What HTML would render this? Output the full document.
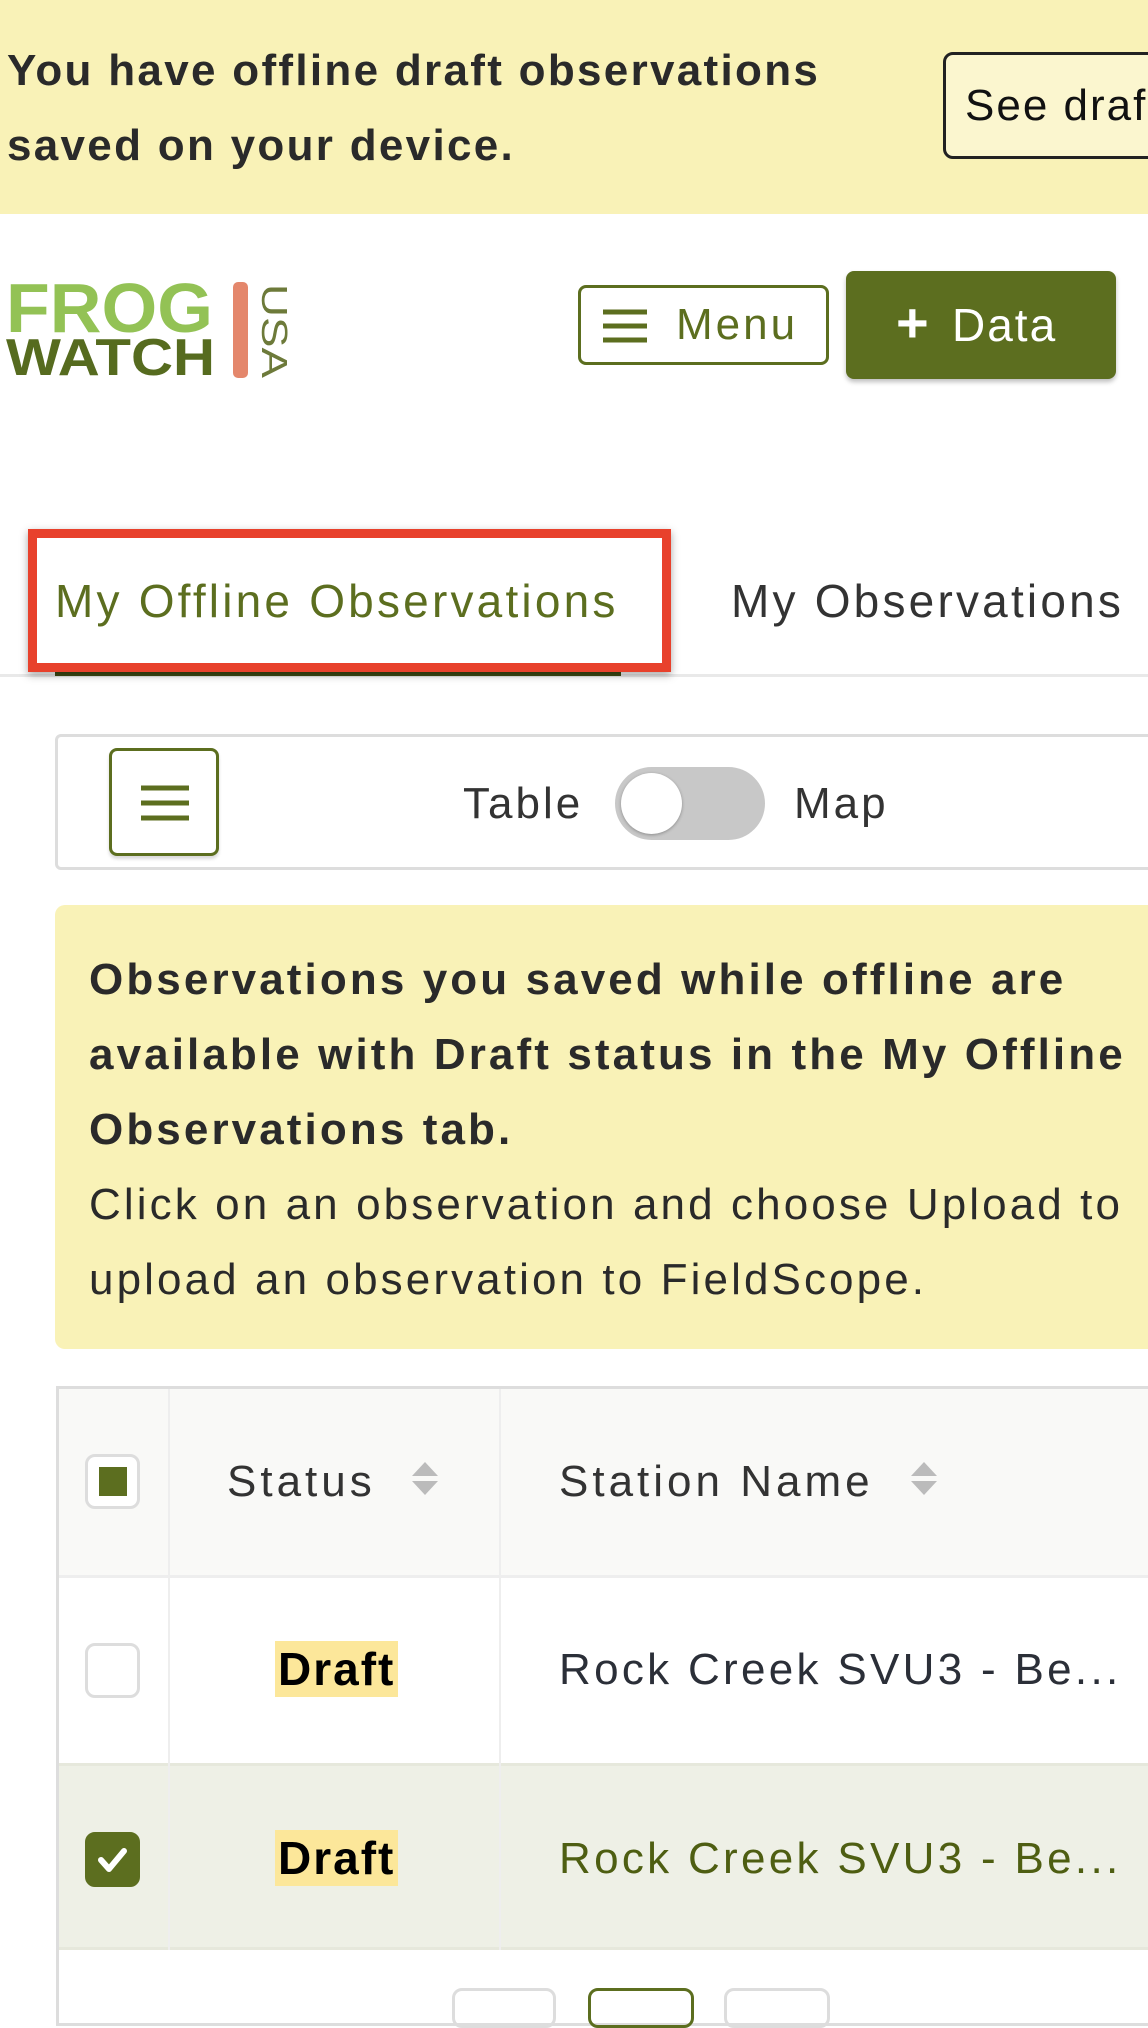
<!DOCTYPE html>
<html><head><meta charset="utf-8">
<style>
*{box-sizing:border-box;margin:0;padding:0}
html,body{width:1148px;height:1996px;overflow:hidden;background:#fff;font-family:"Liberation Sans",sans-serif;color:#222}
.abs{position:absolute}
.banner{left:0;top:0;width:1148px;height:214px;background:#f9f2b7}
.banner p{position:absolute;left:7px;top:33px;font-size:44px;font-weight:bold;line-height:75px;color:#2a2a2a;letter-spacing:2.3px;white-space:nowrap}
.see{left:943px;top:52px;width:260px;height:107px;border:3px solid #222;border-radius:10px;font-size:44px;line-height:101px;padding-left:19px;color:#111;background:#fbf6cf;letter-spacing:2px;white-space:nowrap}
.menu{left:578px;top:285px;width:251px;height:80px;border:3px solid #5c6e1f;border-radius:8px;color:#5c6e1f;font-size:44px}
.data{left:846px;top:271px;width:270px;height:108px;background:#5c6e1f;border-radius:8px;color:#fff;font-size:46px;box-shadow:0 3px 5px rgba(0,0,0,.25)}
.tabtxt{font-size:46px;letter-spacing:3.2px;line-height:60px;white-space:nowrap}
.cb{width:55px;height:55px;border:3px solid #ddd;border-radius:10px;background:#fff}
.th{font-size:44px;color:#333;letter-spacing:4px;line-height:60px;white-space:nowrap}
.draft{background:#fce79a;font-weight:bold;font-size:46px;color:#000;padding:2px 3px;letter-spacing:2px}
.st{font-size:44px;letter-spacing:3.3px;line-height:60px;white-space:nowrap}
.arr{width:0;height:0;border-left:13px solid transparent;border-right:13px solid transparent}
</style></head><body>
<div class="abs banner"><p>You have offline draft observations<br>saved on your device.</p></div>
<div class="abs see">See drafts</div>

<svg class="abs" style="left:0;top:280px" width="295" height="104" viewBox="0 0 295 104">
<text x="6" y="52" font-family="Liberation Sans" font-weight="bold" font-size="70" fill="#93c255" textLength="207" lengthAdjust="spacingAndGlyphs">FROG</text>
<text x="6" y="95" font-family="Liberation Sans" font-weight="bold" font-size="52" fill="#566b1f" textLength="209" lengthAdjust="spacingAndGlyphs">WATCH</text>
<rect x="233" y="2" width="15" height="96" rx="5" fill="#e4876c"/>
<text transform="translate(262,4) rotate(90)" font-family="Liberation Sans" font-size="36" fill="#6d7a3a" textLength="94" lengthAdjust="spacingAndGlyphs">USA</text>
</svg>

<div class="abs menu">
<svg class="abs" style="left:22px;top:20px" width="44" height="36"><g stroke="#5c6e1f" stroke-width="5"><line x1="0" y1="4" x2="44" y2="4"/><line x1="0" y1="18" x2="44" y2="18"/><line x1="0" y1="32" x2="44" y2="32"/></g></svg>
<span class="abs" style="left:95px;top:0;line-height:74px;letter-spacing:3px">Menu</span></div>
<div class="abs data"><span class="abs" style="left:50px;top:0;line-height:104px;font-size:56px;font-weight:bold">+</span><span class="abs" style="left:106px;top:0;line-height:108px;letter-spacing:2px">Data</span></div>

<div class="abs" style="left:0;top:674px;width:1148px;height:3px;background:#e9e9e9"></div>
<div class="abs" style="left:55px;top:668px;width:566px;height:8px;background:#3f4a14"></div>
<div class="abs" style="left:28px;top:529px;width:643px;height:143px;border:9px solid #e8412c;box-shadow:0 3px 8px rgba(0,0,0,.35)"></div>
<div class="abs tabtxt" style="left:55px;top:571px;color:#5c6e1f">My Offline Observations</div>
<div class="abs tabtxt" style="left:731px;top:571px;color:#333">My Observations</div>

<div class="abs" style="left:55px;top:734px;width:1120px;height:136px;border:3px solid #ddd;border-radius:6px"></div>
<div class="abs" style="left:109px;top:748px;width:110px;height:108px;border:3px solid #5c6e1f;border-radius:8px;box-shadow:0 3px 3px rgba(0,0,0,.15)">
<svg class="abs" style="left:29px;top:33px" width="48" height="38"><g stroke="#5c6e1f" stroke-width="5"><line x1="0" y1="4" x2="48" y2="4"/><line x1="0" y1="19" x2="48" y2="19"/><line x1="0" y1="34" x2="48" y2="34"/></g></svg></div>
<div class="abs" style="left:463px;top:774px;line-height:60px;font-size:44px;color:#333;letter-spacing:3px">Table</div>
<div class="abs" style="left:615px;top:767px;width:150px;height:73px;background:#c8c8c8;border-radius:37px"><div class="abs" style="left:6px;top:6px;width:61px;height:61px;border-radius:50%;background:#fff;box-shadow:0 1px 3px rgba(0,0,0,.3)"></div></div>
<div class="abs" style="left:794px;top:774px;line-height:60px;font-size:44px;color:#333;letter-spacing:3px">Map</div>

<div class="abs" style="left:55px;top:905px;width:1120px;height:444px;background:#f9f2b7;border-radius:10px"></div>
<div class="abs" style="left:89px;top:942px;font-size:44px;line-height:75px;color:#2a2a2a;letter-spacing:3.1px;white-space:nowrap"><b>Observations you saved while offline are<br>available with Draft status in the My Offline<br>Observations tab.</b><br>Click on an observation and choose Upload to<br>upload an observation to FieldScope.</div>

<div class="abs" style="left:56px;top:1386px;width:1120px;height:640px;border:3px solid #ddd;border-right:none"></div>
<div class="abs" style="left:59px;top:1389px;width:1100px;height:186px;background:#f9f9f7"></div>
<div class="abs" style="left:59px;top:1575px;width:1100px;height:3px;background:#eee"></div>
<div class="abs" style="left:59px;top:1763px;width:1100px;height:187px;background:#eef0e6;border-top:3px solid #e6e8dc;border-bottom:3px solid #e6e8dc"></div>
<div class="abs" style="left:168px;top:1389px;width:2px;height:561px;background:#eee"></div>
<div class="abs" style="left:499px;top:1389px;width:2px;height:561px;background:#eee"></div>

<div class="abs cb" style="left:85px;top:1454px"><div class="abs" style="left:11px;top:10px;width:28px;height:29px;background:#5c6e1f"></div></div>
<div class="abs th" style="left:227px;top:1452px">Status</div>
<div class="abs arr" style="left:412px;top:1462px;border-bottom:14px solid #bbb"></div>
<div class="abs arr" style="left:412px;top:1481px;border-top:14px solid #bbb"></div>
<div class="abs th" style="left:559px;top:1452px">Station Name</div>
<div class="abs arr" style="left:911px;top:1462px;border-bottom:14px solid #bbb"></div>
<div class="abs arr" style="left:911px;top:1481px;border-top:14px solid #bbb"></div>

<div class="abs cb" style="left:85px;top:1643px"></div>
<div class="abs" style="left:275px;top:1639px;line-height:60px"><span class="draft">Draft</span></div>
<div class="abs st" style="left:559px;top:1640px;color:#2b2f38">Rock Creek SVU3 - Be...</div>

<div class="abs cb" style="left:85px;top:1832px;background:#5c6e1f;border-color:#5c6e1f">
<svg class="abs" style="left:9px;top:10px" width="32" height="30"><path d="M4 15 L12 24 L27 6" stroke="#fff" stroke-width="6" fill="none" stroke-linecap="round" stroke-linejoin="round"/></svg></div>
<div class="abs" style="left:275px;top:1828px;line-height:60px"><span class="draft">Draft</span></div>
<div class="abs st" style="left:559px;top:1829px;color:#4e5e12">Rock Creek SVU3 - Be...</div>

<div class="abs" style="left:452px;top:1988px;width:104px;height:40px;border:3px solid #ddd;border-radius:10px"></div>
<div class="abs" style="left:588px;top:1988px;width:106px;height:40px;border:3px solid #5c6e1f;border-radius:10px"></div>
<div class="abs" style="left:724px;top:1988px;width:106px;height:40px;border:3px solid #ddd;border-radius:10px"></div>
</body></html>
